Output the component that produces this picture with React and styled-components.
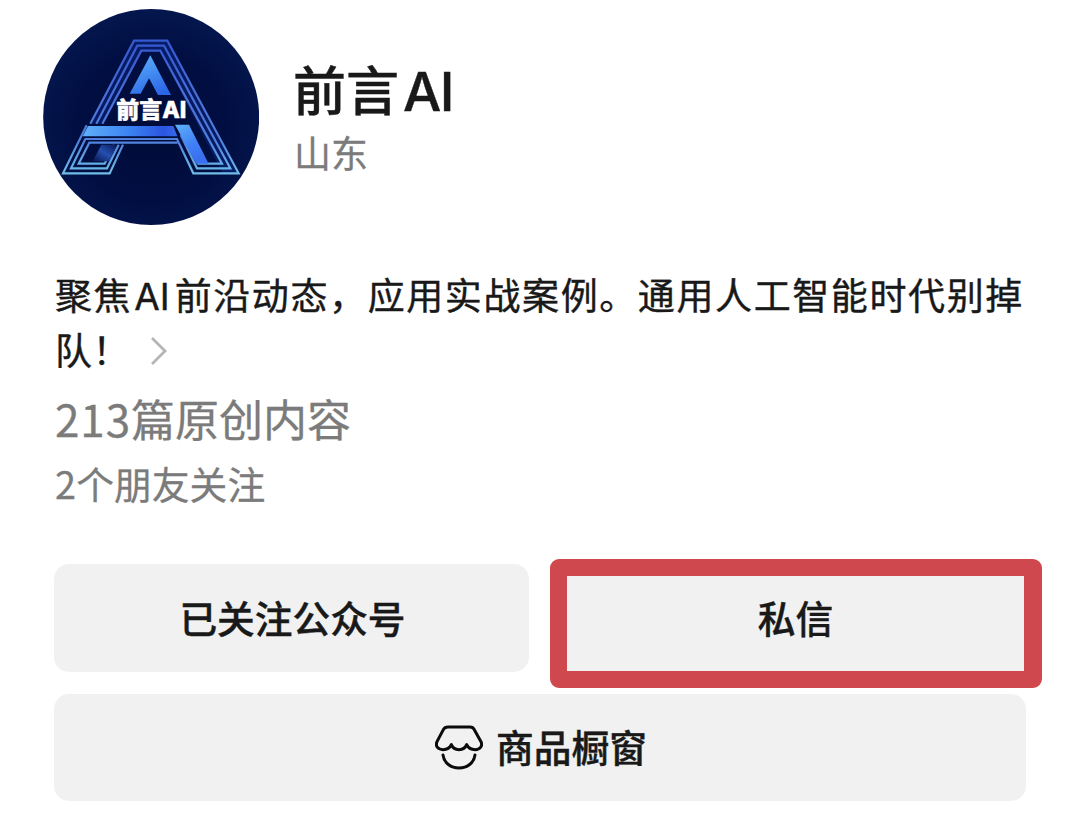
import React from "react";
import styled, { createGlobalStyle } from "styled-components";

const GlobalStyle = createGlobalStyle`
  * { box-sizing: border-box; }
  body {
    margin: 0;
    background: #fff;
    font-family: "Noto Sans CJK SC", "Noto Sans", sans-serif;
    color: #191919;
  }
`;

const Page = styled.main`
  width: 1080px;
  height: 814px;
  padding: 9px 54px 0;
  background: #fff;
  overflow: hidden;
`;

const Header = styled.header`
  display: flex;
  gap: 34px;
  margin-left: -11px;
  height: 216px;
`;

const Avatar = styled.svg`
  width: 216px;
  height: 216px;
  flex: none;
`;

const Identity = styled.div`
  padding-top: 46px;
`;

const Name = styled.h1`
  margin: 0;
  font-size: 53px;
  line-height: 66px;
  font-weight: 500;
  -webkit-text-stroke: 0.4px currentColor;
  white-space: nowrap;
`;

const Latin = styled.span`
  font-family: Inter, sans-serif;
  font-size: ${(p) => p.$size}px;
  margin: 0 ${(p) => p.$after || 0}px 0 ${(p) => p.$before}px;
  letter-spacing: ${(p) => p.$spacing || 0}px;
`;

const Region = styled.div`
  padding-left: 1px;
  font-size: 37px;
  line-height: 54px;
  color: #7b7b7b;
  -webkit-text-stroke: 0.3px currentColor;
`;

const Bio = styled.p`
  margin: 43px 0 0;
  padding-left: 1px;
  font-size: 37px;
  line-height: 53px;
  letter-spacing: 1.6px;
  white-space: nowrap;
  -webkit-text-stroke: 0.4px currentColor;
`;

const Exclaim = styled.span`
  margin: 0 1px 0 -1px;
`;

const Chevron = styled.svg`
  width: 18px;
  height: 30px;
  margin-left: 18px;
  vertical-align: -1px;
`;

const Stat = styled.div`
  margin-top: ${(p) => p.$top}px;
  padding-left: 1px;
  font-size: ${(p) => p.$size}px;
  line-height: 60px;
  color: #7b7b7b;
  white-space: nowrap;
  -webkit-text-stroke: 0.3px currentColor;
`;

const Digits = styled.span`
  letter-spacing: ${(p) => p.$spacing}px;
`;

const Actions = styled.div`
  display: grid;
  grid-template-columns: 475px 475px;
  grid-auto-rows: 107.5px;
  gap: 22px;
  margin-top: 51px;
`;

const Button = styled.button`
  position: relative;
  grid-column: ${(p) => (p.$wide ? "1 / -1" : "auto")};
  display: flex;
  align-items: center;
  justify-content: center;
  gap: 13px;
  border: 0;
  border-radius: ${(p) => (p.$marked ? 0 : 15)}px;
  padding: 0 0 2px ${(p) => (p.$marked ? 14 : 2)}px;
  background: #f1f1f1;
  color: #191919;
  font-family: inherit;
  font-size: 37.7px;
  font-weight: 500;
  line-height: 54px;
  -webkit-text-stroke: 0.4px currentColor;
`;

const Highlight = styled.span`
  position: absolute;
  left: -1px;
  top: -5px;
  width: 492px;
  height: 129px;
  border: 17px solid #cf484d;
  border-right-width: 18px;
  border-radius: 9px;
`;

const ShopIcon = styled.svg`
  width: 48px;
  height: 46px;
  margin-top: 3px;
  flex: none;
`;

function Logo() {
  return (
    <Avatar viewBox="9 27 648 648" role="img" aria-label="前言AI">
      <defs>
        <radialGradient id="night" cx="50%" cy="55%" r="58%">
          <stop offset="0" stopColor="#000c38" />
          <stop offset=".6" stopColor="#010e42" />
          <stop offset="1" stopColor="#04184f" />
        </radialGradient>
        <linearGradient id="line" gradientUnits="userSpaceOnUse" x1="0" y1="120" x2="0" y2="522">
          <stop offset="0" stopColor="#3558cf" />
          <stop offset=".45" stopColor="#4b72d8" />
          <stop offset=".75" stopColor="#4f80dc" />
          <stop offset="1" stopColor="#6fbfe8" />
        </linearGradient>
        <linearGradient id="bar" x1="0" y1="0" x2="1" y2="0">
          <stop offset="0" stopColor="#5fb0f8" />
          <stop offset=".5" stopColor="#3b82f2" />
          <stop offset=".85" stopColor="#2b55e0" />
          <stop offset="1" stopColor="#3568ea" />
        </linearGradient>
        <linearGradient id="peak" x1=".3" y1="0" x2=".7" y2="1">
          <stop offset="0" stopColor="#58adf8" />
          <stop offset="1" stopColor="#2b65e8" />
        </linearGradient>
        <linearGradient id="leg" x1="0" y1="0" x2=".5" y2="1">
          <stop offset="0" stopColor="#5fb0f8" />
          <stop offset=".6" stopColor="#4080f6" />
          <stop offset="1" stopColor="#3a6ff0" />
        </linearGradient>
        <linearGradient id="shade" x1="1" y1="0" x2="0" y2="1">
          <stop offset="0" stopColor="#071755" />
          <stop offset=".5" stopColor="#254fae" />
          <stop offset="1" stopColor="#06154f" />
        </linearGradient>
      </defs>
      <circle cx="333.5" cy="351" r="324" fill="url(#night)" />
      <path
        d="M151 371L282 122H382L596 520H548L359 152H305L190 371Z"
        fill="#10309a"
        fillOpacity=".4"
      />
      <g fill="none" stroke="url(#line)" strokeWidth="6.5">
        <path d="M151 371L282 122H382L596 520H460L411 417H134" />
        <path d="M169 371L292 137H372L571 505H471L422 405" />
        <path d="M187 371L304 152H361L546 491H472" />
        <path d="M140 376L69 520H209L249 434" />
        <path d="M136 417L93 505H201L236 434" />
        <path d="M413 428H148L116 491H194L222 434" />
      </g>
      <path d="M184 434H232L207 484H158Z" fill="url(#shade)" />
      <path d="M144 378H400L412 409H128Z" fill="url(#bar)" />
      <path d="M405 374H447L506 491H469Z" fill="url(#leg)" />
      <path d="M331 166L393 285H354L327 235L302 281H269Z" fill="url(#peak)" />
      <text
        x="229"
        y="354"
        textLength="210"
        lengthAdjust="spacingAndGlyphs"
        fill="#fff"
        stroke="#fff"
        strokeWidth="1.5"
        fontFamily="Inter, 'Noto Sans CJK SC', sans-serif"
        fontSize="69"
        fontWeight="800"
      >
        前言AI
      </text>
    </Avatar>
  );
}

function Shop() {
  return (
    <ShopIcon
      viewBox="43 44 144 138"
      fill="none"
      stroke="#0b0b0b"
      strokeWidth="9"
      strokeLinecap="round"
      strokeLinejoin="round"
    >
      <path d="M82 50H148Q157 50 161 58L181 94C187 108 177 118 164 118C149 118 142 112 138 103C134 113 126 118 115 118C104 118 96 113 92 103C88 112 81 118 67 118C53 118 43 108 49 94L68 58Q72 50 82 50Z" />
      <path d="M67 134C70 158 91 173 115 173C139 173 160 158 163 134" />
    </ShopIcon>
  );
}

export default function App() {
  return (
    <>
      <GlobalStyle />
      <Page>
        <Header>
          <Logo />
          <Identity>
            <Name>
              前言<Latin $size={54} $before={4} $spacing={-1.5}>AI</Latin>
            </Name>
            <Region>山东</Region>
          </Identity>
        </Header>
        <Bio>
          聚焦<Latin $size={37} $before={2} $after={5}>AI</Latin>前沿动态，应用实战案例。通用人工智能时代别掉
          <br />
          队<Exclaim>！</Exclaim>
          <Chevron viewBox="0 0 18 30" fill="none" stroke="#b5b5b5" strokeWidth="2.8">
            <path d="M2 2L15 15L2 28" />
          </Chevron>
        </Bio>
        <Stat $top={12} $size={44}><Digits $spacing={0.9}>213</Digits>篇原创内容</Stat>
        <Stat $top={5} $size={37.8}><Digits $spacing={0.2}>2</Digits>个朋友关注</Stat>
        <Actions>
          <Button>已关注公众号</Button>
          <Button $marked>
            私信
            <Highlight />
          </Button>
          <Button $wide>
            <Shop />
            商品橱窗
          </Button>
        </Actions>
      </Page>
    </>
  );
}
